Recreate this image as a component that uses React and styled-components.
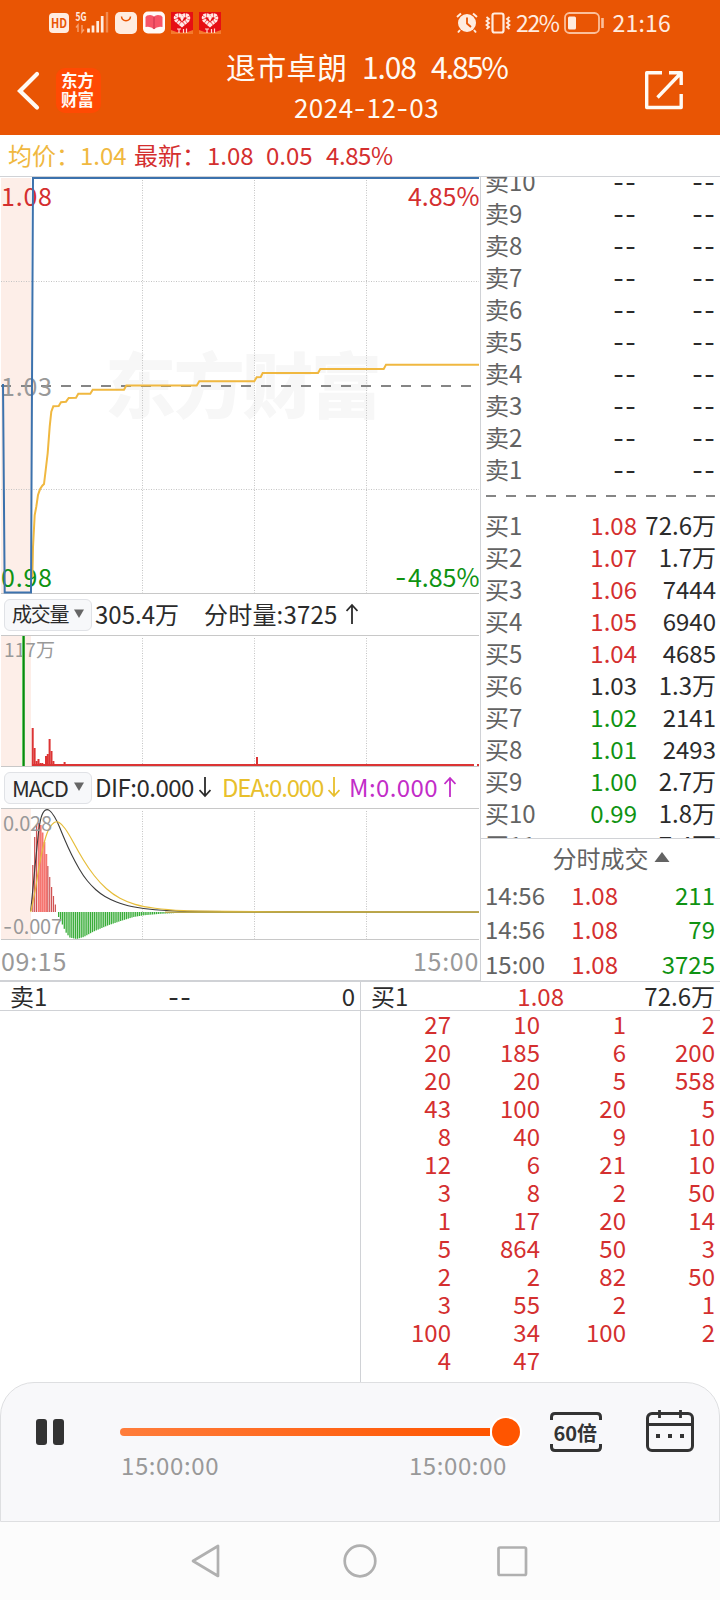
import React from 'react';
import styled, { createGlobalStyle } from 'styled-components';

const colors = {
  brand: '#e95504',
  red: '#d42f2f',
  green: '#0f9312',
  text: '#2b2b2b',
  label: '#636363',
  muted: '#999999',
  yellow: '#f0b840',
  line: '#d0d2d6',
};

const GlobalStyle = createGlobalStyle`
  body {
    margin: 0;
    background: #ffffff;
    font-family: "Noto Sans CJK SC", "Noto Sans", sans-serif;
    color: ${colors.text};
  }
  * {
    box-sizing: border-box;
  }
  svg {
    display: block;
    flex-shrink: 0;
  }
`;

const Screen = styled.div`
  width: 720px;
  height: 1600px;
  display: flex;
  flex-direction: column;
  overflow: hidden;
`;

const Header = styled.header`
  height: 135px;
  flex-shrink: 0;
  background: ${colors.brand};
`;

const StatusBar = styled.div`
  height: 46px;
  display: flex;
  align-items: center;
  justify-content: space-between;
  padding: 0 49px;
  color: #ffece0;
  font-size: 23px;
  line-height: 44px;
`;

const StatusText = styled.span`
  height: 46px;
  margin-left: ${(props) => props.$left}px;
  margin-right: ${(props) => props.$right || 0}px;
  letter-spacing: ${(props) => props.$spacing || 0}px;
`;

const StatusGroup = styled.div`
  display: flex;
  align-items: center;
`;

const AlertIcons = styled.div`
  display: flex;
  gap: 7px;
`;

const TitleBar = styled.div`
  height: 89px;
  display: grid;
  grid-template-columns: 200px 320px 200px;
  color: #fffaf4;
`;

const TitleLeft = styled.div`
  display: flex;
  align-items: center;
  padding-left: 17px;
`;

const Logo = styled.div`
  width: 45px;
  height: 45px;
  margin-left: 16px;
  padding: 3px 2px 0 0;
  border-radius: 9px;
  background: #ff4a03;
  font-size: 16.5px;
  font-weight: 700;
  line-height: 19px;
  text-align: center;
`;

const TitleCenter = styled.div`
  padding-left: 7px;
  text-align: center;
`;

const Title = styled.div`
  display: flex;
  margin-left: 19px;
  font-size: 30px;
  line-height: 40px;
  height: 41px;
`;

const TitleName = styled.span`
  width: 136px;
  text-align: left;
  letter-spacing: 0.3px;
`;

const TitlePrice = styled.span`
  width: 69px;
  text-align: left;
  letter-spacing: -1.1px;
`;

const TitleChange = styled.span`
  letter-spacing: -2px;
`;

const DateText = styled.div`
  padding-left: 6px;
  font-size: 26px;
  line-height: 40px;
  letter-spacing: 0.5px;
`;

const TitleRight = styled.div`
  display: flex;
  align-items: center;
  justify-content: flex-end;
  padding-right: 36px;
`;

// Inter has the wider hyphen
const Hyphen = styled.span`
  font-family: Inter, sans-serif;
  line-height: 1;
  letter-spacing: 0.9px;
`;

const InfoBar = styled.div`
  height: 42px;
  flex-shrink: 0;
  display: grid;
  grid-template-columns: 72px 54px 73px 59px 60px 1fr;
  padding-left: 8px;
  border-bottom: 1px solid ${colors.line};
  color: ${colors.red};
  font-size: 24px;
  line-height: 40px;
  white-space: nowrap;
`;

const Average = styled.span`
  color: ${colors.yellow};
`;

const InfoChange = styled.span`
  letter-spacing: -0.4px;
`;

const Main = styled.main`
  height: 804px;
  flex-shrink: 0;
  display: flex;
`;

const Charts = styled.section`
  width: 480px;
  display: flex;
  flex-direction: column;
`;

const IndicatorBar = styled.div`
  height: 41px;
  display: flex;
  align-items: center;
  padding-left: 4px;
  font-size: 24px;
`;

const Picker = styled.div`
  width: 88px;
  height: 32px;
  display: flex;
  align-items: center;
  justify-content: space-between;
  padding: 0 7px 2px;
  border: 1px solid #e0e2e6;
  border-radius: 6px;
  background: #f7f8fa;
  font-size: ${(props) => props.$size}px;
  letter-spacing: ${(props) => props.$spacing}px;
  line-height: 26px;
  white-space: nowrap;
`;

const Metric = styled.div`
  width: ${(props) => props.$width}px;
  display: flex;
  align-items: center;
  justify-content: space-between;
  margin-left: ${(props) => props.$left}px;
  color: ${(props) => props.$color || colors.text};
  letter-spacing: ${(props) => props.$spacing || 0}px;
  line-height: 32px;
  height: 37px;
  padding-bottom: 2px;
  white-space: nowrap;
`;

const TimeAxis = styled.div`
  height: 41px;
  display: flex;
  justify-content: space-between;
  padding: 0 1px;
  border-bottom: 1px solid ${colors.line};
  color: ${colors.muted};
  font-size: 25px;
  letter-spacing: 0.7px;
  line-height: 40px;
`;

const Quotes = styled.aside`
  width: 240px;
  display: flex;
  flex-direction: column;
  border-left: 1px solid ${colors.line};
`;

const BookList = styled.div`
  height: 662px;
  flex-shrink: 0;
  display: flex;
  flex-direction: column;
  overflow: hidden;
  border-bottom: 1px solid ${colors.line};
`;

const BookRow = styled.div`
  height: 32px;
  flex-shrink: 0;
  display: grid;
  grid-template-columns: 73px 79px 79px;
  padding-left: 4px;
  font-size: 24px;
  line-height: 32px;
  margin-top: ${(props) => props.$top || 0}px;
`;

const BookLabel = styled.span`
  color: ${colors.label};
`;

const Cell = styled.span`
  color: ${(props) => props.$color || colors.text};
  text-align: right;
  white-space: nowrap;
`;

const BookDivider = styled.div`
  height: 2px;
  flex-shrink: 0;
  margin: 10px 5px 12px;
  background: repeating-linear-gradient(90deg, #858585 0 10px, transparent 10px 20px);
`;

const TradesTitle = styled.div`
  height: 39px;
  display: flex;
  align-items: center;
  justify-content: center;
  gap: 5px;
  padding: 0 0 2px 21px;
  color: ${colors.label};
  font-size: 24px;
  line-height: 36px;
`;

const TradeRow = styled.div`
  height: 34.3px;
  display: grid;
  grid-template-columns: 58px 75px 97px;
  padding-left: 4px;
  font-size: 24px;
  line-height: 34px;
`;

const TradeTime = styled.span`
  color: ${colors.label};
`;

const Queues = styled.section`
  height: 401px;
  flex-shrink: 0;
  display: flex;
  border-top: 1px solid ${colors.line};
`;

const Queue = styled.div`
  width: 360px;
  border-left: ${(props) => (props.$divided ? `1px solid ${colors.line}` : 'none')};
`;

const QueueHead = styled.div`
  height: 29px;
  display: grid;
  grid-template-columns: ${(props) => props.$columns};
  padding: 0 5px 0 10px;
  border-bottom: 1px solid ${colors.line};
  font-size: 24px;
  line-height: 28px;
`;

const QueueGrid = styled.div`
  display: grid;
  grid-template-columns: 90px 89px 86px 89px;
  grid-auto-rows: 28px;
  font-size: 24px;
  line-height: 25px;
`;

const Player = styled.section`
  height: 140px;
  flex-shrink: 0;
  display: flex;
  border: 1px solid #dedfe1;
  border-radius: 34px 34px 0 0;
  background: #f8f8fa;
`;

const PauseButton = styled.div`
  width: 119px;
  display: flex;
  gap: 6px;
  padding: 36px 0 0 35px;
`;

const PauseBar = styled.span`
  width: 11px;
  height: 26px;
  border-radius: 3px;
  background: #333333;
`;

const Slider = styled.div`
  width: 400px;
  padding-top: 35px;
`;

const Track = styled.div`
  height: 28px;
  display: flex;
  align-items: center;
`;

const Fill = styled.div`
  width: 370px;
  height: 8px;
  border-radius: 4px 0 0 4px;
  background: linear-gradient(90deg, #ff7d3b, #ff5500);
`;

const Knob = styled.div`
  width: 28px;
  height: 28px;
  margin-left: 2px;
  border-radius: 50%;
  background: #ff5500;
  box-shadow: 0 0 0 2px #ffffff;
`;

const Times = styled.div`
  width: 387px;
  display: flex;
  justify-content: space-between;
  padding-left: 1px;
  color: ${colors.muted};
  font-size: 24px;
  letter-spacing: 0.6px;
  line-height: 34px;
  margin-top: 2px;
`;

const Speed = styled.div`
  width: 52px;
  height: 40px;
  margin: 29px 0 0 30px;
`;

const CalendarButton = styled.div`
  margin: 27px 0 0 44px;
`;

const NavBar = styled.nav`
  height: 78px;
  flex-shrink: 0;
  display: flex;
  justify-content: space-between;
  align-items: center;
  padding: 0 192px 0 190px;
  background: #fcfcfc;
`;

const VALUE_COLORS = { r: colors.red, g: colors.green, k: colors.text };

const sells = [10, 9, 8, 7, 6, 5, 4, 3, 2, 1];

const buys = [
  ['1.08', '72.6万', 'r'],
  ['1.07', '1.7万', 'r'],
  ['1.06', '7444', 'r'],
  ['1.05', '6940', 'r'],
  ['1.04', '4685', 'r'],
  ['1.03', '1.3万', 'k'],
  ['1.02', '2141', 'g'],
  ['1.01', '2493', 'g'],
  ['1.00', '2.7万', 'g'],
  ['0.99', '1.8万', 'g'],
  ['0.98', '7.4万', 'g'],
];

const trades = [
  ['14:56', '1.08', '211'],
  ['14:56', '1.08', '79'],
  ['15:00', '1.08', '3725'],
];

const orders = [
  27, 10, 1, 2,
  20, 185, 6, 200,
  20, 20, 5, 558,
  43, 100, 20, 5,
  8, 40, 9, 10,
  12, 6, 21, 10,
  3, 8, 2, 50,
  1, 17, 20, 14,
  5, 864, 50, 3,
  2, 2, 82, 50,
  3, 55, 2, 1,
  100, 34, 100, 2,
  4, 47,
];

const averageLine =
  '32.3,400 32.7,385 33,370 34.7,338 36.3,329.7 38,318 40,312.3 42.3,308.7 44,307 45.7,293 47.7,276 49.7,249.7 51.3,234.7 53.3,229.3 58.7,229 61,225.3 66,224.7 68.7,221 76,220.7 78.3,216.7 90.3,216.7 92.7,212.7 124,212.7 126.3,208.5 196.7,208.5 199.3,204.3 254.3,204.3 256.7,200.3 260.7,200 262.7,196 318,196 320.3,192 383.7,192 386,187.8 479,187.8';

const volumeBars = [
  [31.7, 38], [33.6, 18], [35.6, 5], [37.5, 7], [39.4, 3], [41.3, 3], [43.2, 2],
  [45, 10], [46.8, 12], [48.6, 27], [50.5, 15], [52.4, 5], [63.6, 4], [256, 9],
];

const macdUp = [47, 75, 87, 89, 87, 79.5, 70, 58, 46, 35, 25, 16, 7.5];

const depthPoints = [
  [58, 5], [62, 13], [65, 20], [69, 25.5], [76, 27], [83, 25], [93, 19.5], [107, 13.5],
  [120, 9], [133, 5], [143, 3.3], [160, 1.8], [180, 0.8],
];

// depth of the falling bars at x, taken between the two nearest points
const depthAt = (x) => {
  const i = depthPoints.findIndex((p) => p[0] > x);
  if (i < 1) return i === 0 ? depthPoints[0][1] : 0.8;
  const [x0, y0] = depthPoints[i - 1];
  const [x1, y1] = depthPoints[i];
  return y0 + ((y1 - y0) * (x - x0)) / (x1 - x0);
};

const macdDown = Array.from({ length: 62 }, (_, i) => 58 + i * 1.88);

const difPoints = [
  [30.7, 103], [33.5, 75], [36, 48], [39.5, 15], [42.7, 4.3], [47, 0.8], [51.7, 4], [57.3, 13.5],
  [61.7, 24.5], [68.3, 40], [75, 53.5], [83.3, 68], [91.7, 78], [100, 85.5], [110, 91.3],
  [123, 96.7], [143, 100.7], [167, 102.7], [190, 103.6], [479, 104],
];

const deaPoints = [
  [30.7, 104], [35, 85], [38.3, 62], [42.3, 42], [46.7, 25], [51.7, 16], [56.7, 13], [61.7, 16],
  [68.3, 25], [78.3, 43.5], [88.3, 60], [100, 75], [113, 86.5], [127, 94], [143, 98.7],
  [167, 101.8], [200, 103.5], [479, 104],
];

const smooth = (pts) => {
  let d = `M${pts[0].join(' ')}`;
  for (let i = 1; i < pts.length - 1; i += 1) {
    const [x, y] = pts[i];
    const [nx, ny] = pts[i + 1];
    d += `Q${x} ${y} ${(x + nx) / 2} ${(y + ny) / 2}`;
  }
  return `${d}L${pts[pts.length - 1].join(' ')}`;
};

const Grid = ({ height }) => (
  <g stroke="#c4c4c4" strokeDasharray="1 1.5">
    {[142.5, 254.5, 366.5].map((x) => (
      <path key={x} d={`M${x} 3V${height}`} />
    ))}
  </g>
);

const PriceChart = () => (
  <svg width="480" height="417">
    <rect x="1" y="1" width="30" height="416" fill="#fdeee8" />
    <text x="105" y="235" fontSize="71" fontWeight="900" fill="#f7f7f7" textLength="277">东方财富</text>
    <Grid height={417} />
    <path d="M1 104.5H479M1 312.5H479" stroke="#c4c4c4" strokeDasharray="1 1.5" />
    <path d="M1 416.5H479" stroke="#c8c8c8" />
    <path d="M1 209H479" stroke="#858585" strokeWidth="2" strokeDasharray="10 10" />
    <g fontSize="25">
      <text x="1" y="29" fill={colors.red} textLength="51">1.08</text>
      <text x="479.5" y="29" textAnchor="end" fill={colors.red} textLength="71.5">4.85%</text>
      <text x="1" y="219" fill={colors.muted} textLength="51">1.03</text>
      <text x="1" y="410" fill={colors.green} textLength="51">0.98</text>
      <text x="479.5" y="410" textAnchor="end" fill={colors.green} textLength="71.5">4.85%</text>
      <text x="395" y="410" fontFamily="Inter" fill={colors.green}>-</text>
    </g>
    <polyline points={averageLine} fill="none" stroke={colors.yellow} strokeWidth="2" />
    <polyline
      points="3,207 4.7,415.5 31,415.5 33,1 479,1"
      fill="none"
      stroke="#3c72ad"
      strokeWidth="2"
    />
  </svg>
);

const VolumeChart = () => (
  <svg width="480" height="132">
    <rect x="1" y="1" width="30" height="130" fill="#fdeee8" />
    <Grid height={131} />
    <path d="M1 0.5H479M1 131.5H479" stroke="#c8c8c8" />
    <text x="4" y="22" fontSize="19" fill={colors.muted} textLength="51">117万</text>
    <rect x="22" y="1" width="3" height="130" fill="#5cc95c" />
    <rect x="23" y="1" width="1.4" height="130" fill="#0f8212" />
    <g fill="#dc3434">
      {volumeBars.map(([x, h]) => (
        <rect key={x} x={x} y={131 - h} width="2" height={h} />
      ))}
      <rect x="32" y="129" width="442" height="2" />
      <rect x="477" y="129" width="2" height="2" />
    </g>
  </svg>
);

const MacdChart = () => (
  <svg width="480" height="132">
    <rect x="1" y="1" width="30" height="130" fill="#fdeee8" />
    <Grid height={131} />
    <path d="M1 0.5H479M1 131.5H479" stroke="#c8c8c8" />
    {macdUp.map((h, i) => (
      <rect
        key={h + i * 100}
        x={32.2 + i * 1.88}
        y={104 - h}
        width={i > 2 && i < 8 ? 1.88 : 1.2}
        height={h}
        fill={i > 2 && i < 8 ? '#f57570' : '#d05353'}
      />
    ))}
    {macdDown.map((x) => (
      <rect key={x} x={x} y="104" width="1.3" height={depthAt(x)} fill="#38ad38" />
    ))}
    <path d={smooth(difPoints)} fill="none" stroke="#3c3c3c" strokeWidth="1.1" />
    <path d={smooth(deaPoints)} fill="none" stroke="#e6bd3a" strokeWidth="1.2" />
    <path d="M165 104.2H479" stroke="#b7a54a" strokeWidth="1.6" />
    <g fill={colors.muted} fontSize="20">
      <text x="3" y="23" textLength="49">0.028</text>
      <text x="13" y="126" textLength="49">0.007</text>
      <text x="3" y="126" fontFamily="Inter">-</text>
    </g>
  </svg>
);

const Arrow = ({ down }) => (
  <svg width="12" height="22" viewBox="1 0 12 22" fill="none" stroke="currentColor" strokeWidth="1.8">
    {down ? <path d="M7 1V20M1.5 14L7 20L12.5 14" /> : <path d="M7 21V2M1.5 8L7 2L12.5 8" />}
  </svg>
);

const Caret = () => (
  <svg width="10" height="9" viewBox="0 0 10 9">
    <path d="M0 0.5H10L5 9Z" fill="#666666" />
  </svg>
);

const Dashes = () => <Hyphen>--</Hyphen>;

const StatusIcons = () => (
  <svg width="174" height="26" viewBox="49 10 174 26">
    <rect x="49" y="13" width="20" height="20" rx="4" fill="#ffece0" />
    <text x="51" y="28" fontSize="12.5" fontWeight="700" fill={colors.brand} textLength="16" lengthAdjust="spacingAndGlyphs">HD</text>
    <text x="75.5" y="21" fontSize="12" fontWeight="700" fill="#ffece0" textLength="11" lengthAdjust="spacingAndGlyphs">5G</text>
    <path d="M78 32V25L76 27.5M82 25V32L84 29.5" fill="none" stroke="#f6a273" strokeWidth="1.4" />
    <path d="M88.5 32.5V28.5M93 32.5V25.5M97.7 32.5V21M102.2 32.5V16" stroke="#ffece0" strokeWidth="2.7" />
    <path d="M107 32.5V12" stroke="#f08a50" strokeWidth="2.4" />
    <rect x="115" y="12" width="22" height="22" rx="5" fill="#ffece0" />
    <path d="M121.5 16.5C122 22 130 22 130.5 16.5" fill="none" stroke={colors.brand} strokeWidth="1.5" />
    <rect x="143" y="11.5" width="22" height="22" rx="5" fill="#fffaf8" />
    <path d="M145.5 17L147 15.5Q151.5 14 154 16.5Q156.5 14 161 15.5L162.5 17V27Q157 26 154 29.3Q151 26 145.5 27Z" fill="#f75468" />
    <path d="M154 17V29" stroke="#c8304c" strokeWidth="1" />
    {[171, 199].map((x) => (
      <g key={x}>
        <rect x={x} y="12" width="22" height="22" fill="#e60f14" />
        <path d={`M${x} 34V30Q${x + 11} 35 ${x + 22} 30V34Z`} fill="#f47a2e" />
        <path
          d={`M${x + 11} 25L${x + 5.5} 20.5Q${x + 3.5} 17 ${x + 6} 15.5Q${x + 9.5} 14.5 ${x + 11} 17.5Q${x + 12.5} 14.5 ${x + 16} 15.5Q${x + 18.5} 17 ${x + 16.5} 20.5Z`}
          fill="none"
          stroke="#ffe9e6"
          strokeWidth="3.8"
          strokeDasharray="2.4 0.5"
        />
        <path
          d={`M${x + 6} 29H${x + 10}M${x + 8} 29V33M${x + 12.5} 29V33M${x + 15.5} 28.5V33`}
          stroke="#ffd9d0"
          strokeWidth="1.2"
        />
      </g>
    ))}
  </svg>
);

const AlarmIcon = () => (
  <svg width="22" height="22" viewBox="0 0 22 22">
    <circle cx="11" cy="11" r="9" fill="#ffece0" />
    <path d="M1 5L5 1.5M21 5L17 1.5M4 18L2 20.5M18 18L20 20.5" stroke="#ffece0" strokeWidth="2" />
    <path d="M11 5.5V11.5L15 15" fill="none" stroke={colors.brand} strokeWidth="1.8" />
  </svg>
);

const VibrateIcon = () => (
  <svg width="26" height="22" viewBox="0 0 26 22" fill="none" stroke="#ffece0">
    <rect x="7.5" y="1.5" width="11" height="19" rx="2" strokeWidth="2.2" />
    <path
      d="M1.5 5L4 7L1.5 9L4 11L1.5 13L4 15L1.5 17M24.5 5L22 7L24.5 9L22 11L24.5 13L22 15L24.5 17"
      strokeWidth="1.8"
    />
  </svg>
);

const BatteryIcon = () => (
  <svg width="41" height="22" viewBox="0 0 41 22">
    <rect x="1" y="1" width="34" height="20" rx="4.5" fill="none" stroke="#fbbf9b" strokeWidth="1.8" />
    <rect x="4" y="4.5" width="8" height="13" rx="1.5" fill="#ffece0" />
    <path d="M38.5 6V16" stroke="#fbbf9b" strokeWidth="2.6" />
  </svg>
);

const BackIcon = () => (
  <svg width="23" height="40" viewBox="0 0 23 40">
    <path d="M20 3L3 20L20 36.5" fill="none" stroke="#fffaf4" strokeWidth="4.2" strokeLinecap="round" />
  </svg>
);

const ShareIcon = () => (
  <svg width="40" height="40" viewBox="0 0 40 40" fill="none" stroke="#fffaf4" strokeWidth="3.4">
    <path
      d="M18 1.7H2.7V36.5H37.2V23M25 1.7H37.2V14M36.5 2.5L13.5 26.5"
      strokeLinejoin="round"
    />
  </svg>
);

const SpeedIcon = () => (
  <svg width="52" height="40" viewBox="0 0 52 40">
    <path
      d="M1.5 8V5Q1.5 1.5 5 1.5H47Q50.5 1.5 50.5 5V8M1.5 32V35Q1.5 38.5 5 38.5H47Q50.5 38.5 50.5 35V32"
      fill="none"
      stroke="#333333"
      strokeWidth="3"
    />
    <text x="3.5" y="28.5" fontSize="20" fontWeight="700" fill="#333333" textLength="43.5">60倍</text>
  </svg>
);

const CalendarIcon = () => (
  <svg width="48" height="42" viewBox="0 0 48 42">
    <rect x="1.5" y="3.5" width="45" height="37" rx="4.5" fill="none" stroke="#333333" strokeWidth="3" />
    <path d="M2 14.5H46M13.5 0V8M34.5 0V8" stroke="#333333" strokeWidth="2.8" />
    <path d="M10 26H14M22 26H26M34 26H38" stroke="#333333" strokeWidth="4" />
  </svg>
);

const App = () => (
  <Screen>
    <GlobalStyle />
    <Header>
      <StatusBar>
        <StatusGroup>
          <StatusIcons />
        </StatusGroup>
        <StatusGroup>
          <AlertIcons>
            <AlarmIcon />
            <VibrateIcon />
          </AlertIcons>
          <StatusText $left={5} $right={5} $spacing={-1.4}>22%</StatusText>
          <BatteryIcon />
          <StatusText $left={8} $spacing={0.2}>21:16</StatusText>
        </StatusGroup>
      </StatusBar>
      <TitleBar>
        <TitleLeft>
          <BackIcon />
          <Logo>东方<br />财富</Logo>
        </TitleLeft>
        <TitleCenter>
          <Title>
            <TitleName>退市卓朗</TitleName>
            <TitlePrice>1.08</TitlePrice>
            <TitleChange>4.85%</TitleChange>
          </Title>
          <DateText>
            2024<Hyphen>-</Hyphen>12<Hyphen>-</Hyphen>03
          </DateText>
        </TitleCenter>
        <TitleRight>
          <ShareIcon />
        </TitleRight>
      </TitleBar>
    </Header>
    <InfoBar>
      <Average>均价：</Average>
      <Average>1.04</Average>
      <span>最新：</span>
      <span>1.08</span>
      <span>0.05</span>
      <InfoChange>4.85%</InfoChange>
    </InfoBar>
    <Main>
      <Charts>
        <PriceChart />
        <IndicatorBar>
          <Picker $size={20} $spacing={-1.2}>
            成交量
            <Caret />
          </Picker>
          <Metric $left={3} $width={85}>305.4万</Metric>
          <Metric $left={24} $width={154} $spacing={0.2}>
            分时量:3725
            <Arrow />
          </Metric>
        </IndicatorBar>
        <VolumeChart />
        <IndicatorBar>
          <Picker $size={22} $spacing={-1.1}>
            MACD
            <Caret />
          </Picker>
          <Metric $left={3} $width={116} $spacing={-0.5}>
            DIF:0.000
            <Arrow down />
          </Metric>
          <Metric $left={11} $width={118} $spacing={-1.2} $color="#e8bf2c">
            DEA:0.000
            <Arrow down />
          </Metric>
          <Metric $left={9} $width={107} $spacing={0.4} $color="#c22cc8">
            M:0.000
            <Arrow />
          </Metric>
        </IndicatorBar>
        <MacdChart />
        <TimeAxis>
          <span>09:15</span>
          <span>15:00</span>
        </TimeAxis>
      </Charts>
      <Quotes>
        <BookList>
          {sells.map((n) => (
            <BookRow key={n} $top={n === 10 ? -12 : 0}>
              <BookLabel>卖{n}</BookLabel>
              <Cell><Dashes /></Cell>
              <Cell><Dashes /></Cell>
            </BookRow>
          ))}
          <BookDivider />
          {buys.map(([price, qty, tone], i) => (
            <BookRow key={price}>
              <BookLabel>买{i + 1}</BookLabel>
              <Cell $color={VALUE_COLORS[tone]}>{price}</Cell>
              <Cell>{qty}</Cell>
            </BookRow>
          ))}
        </BookList>
        <TradesTitle>
          分时成交
          <svg width="16" height="12" viewBox="0 0 16 12">
            <path d="M8 0L15.5 10H0.5Z" fill="#636363" />
          </svg>
        </TradesTitle>
        {trades.map(([time, price, qty]) => (
          <TradeRow key={qty}>
            <TradeTime>{time}</TradeTime>
            <Cell $color={colors.red}>{price}</Cell>
            <Cell $color={colors.green}>{qty}</Cell>
          </TradeRow>
        ))}
      </Quotes>
    </Main>
    <Queues>
      <Queue>
        <QueueHead $columns="80px 102px 1fr">
          <span>卖1</span>
          <Cell><Dashes /></Cell>
          <Cell>0</Cell>
        </QueueHead>
      </Queue>
      <Queue $divided>
        <QueueHead $columns="80px 113px 1fr">
          <span>买1</span>
          <Cell $color={colors.red}>1.08</Cell>
          <Cell>72.6万</Cell>
        </QueueHead>
        <QueueGrid>
          {orders.map((size, i) => (
            // eslint-disable-next-line react/no-array-index-key
            <Cell key={i} $color={colors.red}>{size}</Cell>
          ))}
        </QueueGrid>
      </Queue>
    </Queues>
    <Player>
      <PauseButton>
        <PauseBar />
        <PauseBar />
      </PauseButton>
      <Slider>
        <Track>
          <Fill />
          <Knob />
        </Track>
        <Times>
          <span>15:00:00</span>
          <span>15:00:00</span>
        </Times>
      </Slider>
      <Speed>
        <SpeedIcon />
      </Speed>
      <CalendarButton>
        <CalendarIcon />
      </CalendarButton>
    </Player>
    <NavBar>
      <svg width="32" height="36" viewBox="0 0 32 36">
        <path d="M3 18L28 3V33Z" fill="none" stroke="#b0b0b0" strokeWidth="2.7" strokeLinejoin="round" />
      </svg>
      <svg width="34" height="34" viewBox="0 0 34 34">
        <circle cx="17" cy="17" r="15.3" fill="none" stroke="#b0b0b0" strokeWidth="2.7" />
      </svg>
      <svg width="31" height="31" viewBox="0 0 31 31">
        <rect x="1.5" y="1.5" width="27.5" height="27.5" rx="1.5" fill="none" stroke="#b0b0b0" strokeWidth="2.7" />
      </svg>
    </NavBar>
  </Screen>
);

export default App;
